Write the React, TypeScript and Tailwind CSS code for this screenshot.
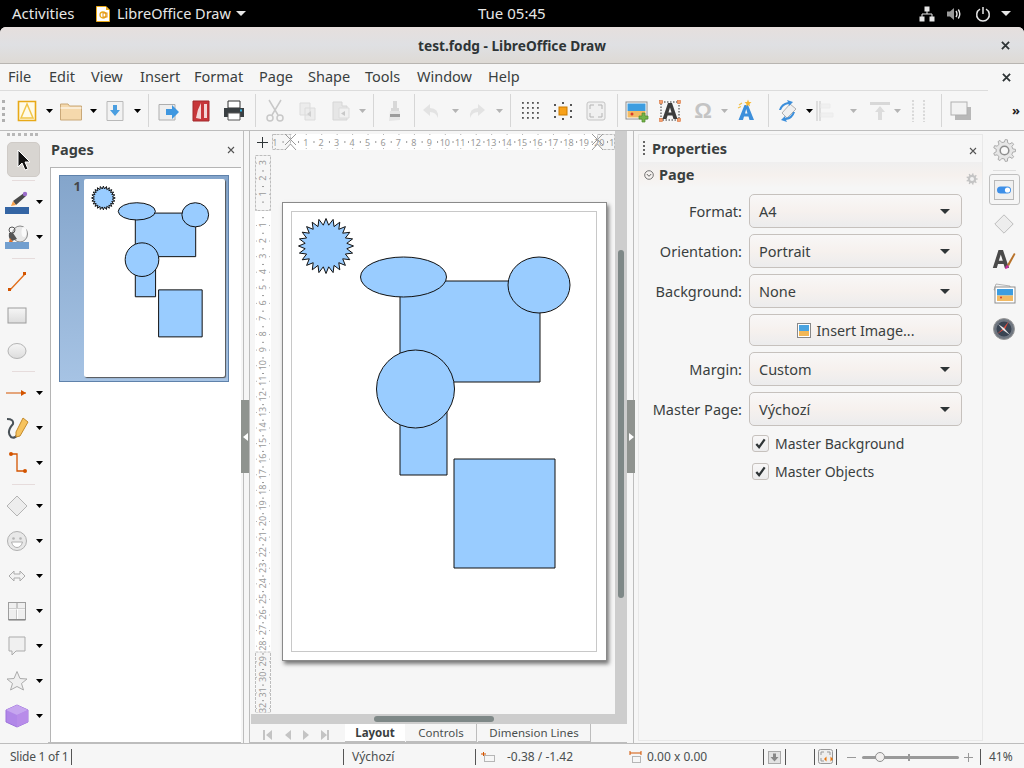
import React from "react";

const FONT = "[font-family:'Noto_Sans','Open_Sans',sans-serif]";

function starPoints(cx: number, cy: number, R: number, r: number, n: number) {
  const pts: string[] = [];
  for (let i = 0; i < n * 2; i++) {
    const a = (Math.PI * i) / n - Math.PI / 2;
    const q = i % 2 === 0 ? R : r;
    pts.push(`${(cx + q * Math.cos(a)).toFixed(1)},${(cy + q * Math.sin(a)).toFixed(1)}`);
  }
  return pts.join(" ");
}

function gearPoints(cx: number, cy: number, R: number, r: number, n: number) {
  const pts: string[] = [];
  const w = Math.PI / n;
  for (let i = 0; i < n; i++) {
    const a = (2 * Math.PI * i) / n;
    [
      [a - w * 0.55, r],
      [a - w * 0.3, R],
      [a + w * 0.3, R],
      [a + w * 0.55, r],
    ].forEach(([t, q]) => pts.push(`${(cx + q * Math.cos(t)).toFixed(2)},${(cy + q * Math.sin(t)).toFixed(2)}`));
  }
  return pts.join(" ");
}

function Shapes({ className }: { className: string }) {
  const p = { fill: "#99ccff", stroke: "#111", strokeWidth: 1, vectorEffect: "non-scaling-stroke" as const };
  return (
    <svg viewBox="0 0 325 459" className={className}>
      <polygon points={starPoints(44, 44, 27.5, 21, 24)} {...p} />
      <rect x="118" y="79" width="140" height="101" {...p} />
      <ellipse cx="121.5" cy="75" rx="43" ry="20" {...p} />
      <ellipse cx="257" cy="83" rx="31" ry="28" {...p} />
      <rect x="118" y="208" width="47" height="65" {...p} />
      <circle cx="133.5" cy="187" r="39" {...p} />
      <rect x="172" y="257" width="101" height="109" {...p} />
    </svg>
  );
}

function Ic({ children, s = 24, className = "" }: { children: React.ReactNode; s?: number; className?: string }) {
  return (
    <svg viewBox="0 0 24 24" width={s} height={s} className={`shrink-0 ${className}`}>
      {children}
    </svg>
  );
}

function Arrow({ className = "", dim = false }: { className?: string; dim?: boolean }) {
  return (
    <svg viewBox="0 0 7 4" width="7" height="4" className={`shrink-0 ${className}`}>
      <path d="M0 0 H7 L3.5 4 Z" fill={dim ? "#b4b4b4" : "#000"} />
    </svg>
  );
}

function TSep({ className }: { className: string }) {
  return <div className={`w-px h-[33px] bg-[#d6d6d6] shrink-0 ${className}`} />;
}

function LSep() {
  return <div className="h-px w-[23px] bg-[#e6dcdc] ml-[12px]" />;
}

function LRow({ children, arrow, className = "" }: { children: React.ReactNode; arrow?: boolean; className?: string }) {
  return (
    <div className={`flex items-center h-[35px] ${className}`}>
      <div className="w-[34px] flex justify-center">{children}</div>
      {arrow ? <Arrow className="ml-[1.5px]" /> : null}
    </div>
  );
}

function Drop({ label, value }: { label: string; value: string }) {
  return (
    <div className="flex items-center gap-[7px]">
      <div className="w-[103px] pt-[2px] text-right text-[14.5px] text-[#3a3f3f]">{label}</div>
      <div className="w-[213px] h-[34px] rounded-[5px] border border-[#c6c1bd] bg-gradient-to-b from-[#f8f7f7] via-[#f6f1ee] to-[#ececed] flex items-center justify-between pl-[9px] pr-[11px] text-[14.5px] text-[#3a3f3f]">
        <span className="pt-[2px]">{value}</span>
        <div className="w-0 h-0 border-l-[5px] border-r-[5px] border-t-[5px] border-l-transparent border-r-transparent border-t-[#2e3436]" />
      </div>
    </div>
  );
}

function Check({ label }: { label: string }) {
  return (
    <div className="flex items-center h-[28px] ml-[113px] text-[14px] text-[#3a3f3f]">
      <div className="w-[17px] h-[17px] rounded-[3px] border border-[#c6c1bd] bg-gradient-to-b from-[#f8f7f7] to-[#ececed] flex items-center justify-center">
        <svg viewBox="0 0 14 14" width="13" height="13">
          <path d="M2.5 7.5 L5.5 11 L11.5 2.5" fill="none" stroke="#2e3436" strokeWidth="2.4" />
        </svg>
      </div>
      <span className="ml-[6px]">{label}</span>
    </div>
  );
}

function HRuler() {
  const ticks: React.ReactNode[] = [];
  const step = 15.45;
  const o = 290.3 - 272;
  for (let i = -1; i <= 21; i++) {
    const x = o + i * step;
    if (i !== 0)
      ticks.push(
        <text key={"t" + i} x={i > 20 ? x - 3 : x} y="11.5" textAnchor="middle" fontSize="9" fill="#9a9a9a" fontFamily="'Noto Sans'">
          {i < 0 ? -i : i > 20 ? i - 20 : i}
        </text>
      );
    ticks.push(<rect key={"d" + i} x={x + step / 2} y="7" width="1" height="2" fill="#9a9a9a" />);
    ticks.push(<rect key={"u" + i} x={x} y="0" width="1" height="1" fill="#b4b4b4" />);
    ticks.push(<rect key={"b" + i} x={x} y="14" width="1" height="1" fill="#b4b4b4" />);
  }
  return (
    <svg width="343" height="16" className="block">
      <rect width="343" height="16" fill="#ffffff" />
      <rect x="0.5" y="0.5" width="18" height="15" fill="#f6f6f6" stroke="#bdbdbd" strokeDasharray="3 1" />
      <rect x="325.5" y="0.5" width="17" height="15" fill="#f6f6f6" stroke="#bdbdbd" strokeDasharray="3 1" />
      {ticks}
      <path d="M13 0 L24 11 M24 0 L13 11 M13 16 L18.5 10 L24 16" stroke="#9a9a9a" fill="#fff" strokeWidth="1" />
      <path d="M320 0 L331 11 M331 0 L320 11 M320 16 L325.5 10 L331 16" stroke="#9a9a9a" fill="#fff" strokeWidth="1" />
    </svg>
  );
}

function VRuler() {
  const ticks: React.ReactNode[] = [];
  const step = 15.58;
  const o = 209.4 - 155;
  const H = 558;
  for (let i = -3; i <= 32; i++) {
    const y = o + i * step;
    if (i !== 0)
      ticks.push(
        <text key={"t" + i} x="7.5" y={y} transform={`rotate(-90 7.5 ${y})`} textAnchor="middle" dominantBaseline="central" fontSize="9" fill="#9a9a9a" fontFamily="'Noto Sans'">
          {i < 0 ? -i : i}
        </text>
      );
    ticks.push(<rect key={"d" + i} x="7" y={y + step / 2} width="2" height="1" fill="#9a9a9a" />);
    ticks.push(<rect key={"l" + i} x="1" y={y} width="1" height="1" fill="#b4b4b4" />);
    ticks.push(<rect key={"r" + i} x="14" y={y} width="1" height="1" fill="#b4b4b4" />);
  }
  return (
    <svg width="16" height={H} className="block">
      <rect width="16" height={H} fill="#ffffff" />
      <rect x="0.5" y="0.5" width="15" height="55" fill="#f6f6f6" stroke="#bdbdbd" strokeDasharray="3 1" />
      <rect x="0.5" y="497" width="15" height="61" fill="#f6f6f6" stroke="#bdbdbd" strokeDasharray="3 1" />
      {ticks}
    </svg>
  );
}

function Sash({ left }: { left?: boolean }) {
  return (
    <div className={`h-full relative shrink-0 ${left ? "w-[9px]" : "w-[8px]"}`}>
      <div className={`absolute top-0 bottom-0 w-px bg-[#bdbdbd] ${left ? "left-[2px] " : "left-[6px]"}`} />
      {left ? <div className="absolute top-0 bottom-0 w-px bg-[#bdbdbd] left-[8px]" /> : null}
      <div className="absolute left-0 top-[269px] w-[8px] h-[73px] bg-[#8f938f] flex items-center justify-center">
        <div
          className={`w-0 h-0 border-t-[4px] border-b-[4px] border-t-transparent border-b-transparent ${
            left ? "border-r-[5px] border-r-white" : "border-l-[5px] border-l-white"
          }`}
        />
      </div>
    </div>
  );
}

const cursorIc = (
  <Ic s={24}>
    <path d="M6 2 L6 19 L10 15 L13 22 L16 21 L13 14 L18 14 Z" fill="#111" stroke="#fff" strokeWidth="1" />
  </Ic>
);

export default function App() {
  return (
    <div className={`w-[1024px] h-[768px] overflow-hidden bg-black flex flex-col ${FONT}`}>
      {/* GNOME top bar */}
      <div className="h-[27px] bg-black text-[#e6e6e6] text-[14.5px] flex items-center shrink-0 relative">
        <span className="ml-[12px] w-[84px] text-[15px]">Activities</span>
        <svg viewBox="0 0 14 16" width="14" height="16" className="shrink-0">
          <path d="M0.5 0.5 H10 L13.5 4 V15.5 H0.5 Z" fill="#fff" stroke="#e8a917" />
          <path d="M10 0.5 L13.5 4 H10 Z" fill="#e8a917" />
          <circle cx="7" cy="9" r="3" fill="none" stroke="#e8a917" strokeWidth="1.3" />
          <rect x="7" y="7" width="4" height="4" fill="none" stroke="#e28f1a" strokeWidth="1" />
        </svg>
        <span className="ml-[7px] w-[114px] whitespace-nowrap">LibreOffice Draw</span>
        <div className="ml-[5px] w-0 h-0 border-l-[5px] border-r-[5px] border-t-[5px] border-l-transparent border-r-transparent border-t-[#e6e6e6]" />
        <span className="ml-[232px] text-[15px]">Tue 05:45</span>
        <div className="ml-auto flex items-center mr-[13px]">
          <svg viewBox="0 0 16 16" width="16" height="16">
            <path d="M5.5 0.5 h5 v5 h-5 z M0.5 10.5 h5 v5 h-5 z M10.5 10.5 h5 v5 h-5 z" fill="#e6e6e6" />
            <path d="M8 5 V8 M3 11 V8 H13 V11" stroke="#e6e6e6" fill="none" />
          </svg>
          <svg viewBox="0 0 16 16" width="16" height="16" className="ml-[11px]">
            <path d="M1 5.5 H4 L8 2 V14 L4 10.5 H1 Z" fill="#9a9a9a" />
            <path d="M10 5 Q12 8 10 11 M12.3 3.5 Q15.3 8 12.3 12.5" fill="none" stroke="#e6e6e6" strokeWidth="1.4" />
          </svg>
          <svg viewBox="0 0 16 16" width="16" height="16" className="ml-[13px]">
            <path d="M5 3.2 A6.3 6.3 0 1 0 11 3.2" fill="none" stroke="#e6e6e6" strokeWidth="1.5" />
            <path d="M8 1 V8" stroke="#e6e6e6" strokeWidth="1.5" />
          </svg>
          <div className="ml-[10px] w-0 h-0 border-l-[5px] border-r-[5px] border-t-[5px] border-l-transparent border-r-transparent border-t-[#e6e6e6]" />
        </div>
      </div>

      {/* window */}
      <div className="flex-1 flex flex-col bg-[#f6f6f6] rounded-t-[6px] overflow-hidden">
        {/* title bar */}
        <div className="h-[37px] shrink-0 border-b border-[#b8b5b1] bg-gradient-to-b from-[#e6dfdd] via-[#dfe0e3] to-[#dedad5] flex items-center relative">
          <div className="w-full pt-[2px] text-center text-[13.7px] font-bold text-[#2e3436]">test.fodg - LibreOffice Draw</div>
          <svg viewBox="0 0 10 10" width="9" height="9" className="absolute right-[14px] top-[14px]">
            <path d="M1 1 L9 9 M9 1 L1 9" stroke="#2e3436" strokeWidth="2" />
          </svg>
        </div>

        {/* menu */}
        <div className="h-[27px] shrink-0 flex items-center relative">
          <div className="w-[988px] h-full flex items-center pl-[8px] text-[14.5px] text-[#3a3f3f] border-b border-[#dcdcdc]">
            <span className="w-[41px]">File</span>
            <span className="w-[42px]">Edit</span>
            <span className="w-[49px]">View</span>
            <span className="w-[54px]">Insert</span>
            <span className="w-[65px]">Format</span>
            <span className="w-[49px]">Page</span>
            <span className="w-[57px]">Shape</span>
            <span className="w-[52px]">Tools</span>
            <span className="w-[71px]">Window</span>
            <span>Help</span>
          </div>
          <svg viewBox="0 0 10 10" width="9" height="9" className="ml-[14px]">
            <path d="M1 1 L9 9 M9 1 L1 9" stroke="#2e3436" strokeWidth="2" />
          </svg>
        </div>

        {/* toolbar */}
        <div className="h-[40px] shrink-0 flex items-center border-b border-[#bdbdbd]">
          <div className="ml-[2px] w-[3px] h-[22px] border-l-[3px] border-dotted border-[#b0b0b0] shrink-0" />
          {/* new */}
          <Ic className="ml-[10px]"><path d="M3.5 2.5 H20.5 V21.5 H3.5 Z" fill="#fffbe8" stroke="#e8a917" strokeWidth="1.6" /><path d="M12 5 L6 19 H18 Z" fill="none" stroke="#f1c64a" strokeWidth="1.5" /></Ic>
          <Arrow className="ml-[7px]" />
          <Ic className="ml-[6px]"><path d="M1.5 5 H9 L10.5 7 H22.5 V21 H1.5 Z" fill="#f5d9ac" stroke="#c9a878" /><path d="M1.5 9 H22.5" stroke="#fff" /></Ic>
          <Arrow className="ml-[7px]" />
          <Ic className="ml-[6px]"><path d="M4 2.5 H20 V21.5 H4 Z" fill="#f2f2f2" stroke="#b9b9b9" /><path d="M10 6 H14 V11 H17 L12 17 L7 11 H10 Z" fill="#4a9ee0" /></Ic>
          <Arrow className="ml-[7px]" />
          <TSep className="ml-[7px]" />
          <Ic className="ml-[7px]"><path d="M3 5.5 H19 V21 H3 Z" fill="#eeeeee" stroke="#aeaeae" /><path d="M10 10 H16 V6 L23 13 L16 20 V16 H10 Z" fill="#3f97e0" /></Ic>
          <Ic className="ml-[9px]"><path d="M4 2 H20 V22 H4 Z" fill="#c7373a" stroke="#a32a2d" /><path d="M12 4 Q8 11 7 19 L12 20 Z M15 5 V19 H18 V5 Z" fill="#f3d7d7" /></Ic>
          <Ic className="ml-[9px]"><path d="M6 2 H18 V9 H6 Z" fill="#fff" stroke="#333" /><path d="M2 9 H22 V18 H18 V14 H6 V18 H2 Z" fill="#3a3f42" /><path d="M6 14 H18 V21 H6 Z" fill="#fff" stroke="#555" /><path d="M18 10.5 h2 v2 h-2 z" fill="#35b6e6" /></Ic>
          <TSep className="ml-[9px]" />
          {/* cut copy paste */}
          <Ic className="ml-[7px]"><g fill="none" stroke="#c8c8c8" strokeWidth="1.5"><path d="M6 1 L15 16 M18 1 L9 16" /><circle cx="7" cy="19" r="3" /><circle cx="17" cy="19" r="3" /></g></Ic>
          <Ic className="ml-[9px]"><path d="M4 4 H14 V16 H4 Z M9 9 H19 V21 H9 Z" fill="#ececec" stroke="#dcdcdc" /><path d="M15 12 L11 15 L15 18 Z" fill="#cfcfcf" /></Ic>
          <Ic className="ml-[9px]"><path d="M4 3 H13 V7 H18 V21 H4 Z" fill="#e6e6e6" stroke="#d6d6d6" /><path d="M10 9 H20 V19 H10 Z" fill="#f0f0f0" stroke="#dcdcdc" /><path d="M16 12 L12 14.5 L16 17 Z" fill="#c8c8c8" /></Ic>
          <Arrow dim className="ml-[6px]" />
          <TSep className="ml-[7px]" />
          <Ic className="ml-[9px]"><path d="M10 2 H14 V9 H16 V12 H8 V9 H10 Z" fill="#d8d8d8" /><path d="M7 12 H17 V21 L6 22 Z" fill="#e6e6e6" /><path d="M7 15 H17 V18 H7 Z" fill="#9c9c9c" /></Ic>
          <TSep className="ml-[7px]" />
          <Ic className="ml-[5px]"><path d="M10 5 L3 11 L10 17 V13 Q16 13 18 19 Q19 9 10 9 Z" fill="#e3e3e3" /></Ic>
          <Arrow dim className="ml-[8px]" />
          <Ic className="ml-[5px]"><path d="M14 5 L21 11 L14 17 V13 Q8 13 6 19 Q5 9 14 9 Z" fill="#e3e3e3" /></Ic>
          <Arrow dim className="ml-[8px]" />
          <TSep className="ml-[7px]" />
          {/* grid */}
          <Ic className="ml-[8px]"><g fill="#555">{[3, 8, 13, 18].map((y) => [3, 8, 13, 18].map((x) => <rect key={x + "-" + y} x={x} y={y} width="1.8" height="1.8" />))}</g></Ic>
          <Ic className="ml-[8px]"><rect x="8" y="8" width="8" height="8" fill="#f7a11a" stroke="#c97b00" /><g fill="#555"><rect x="3" y="5" width="2" height="2" /><rect x="3" y="11" width="2" height="2" /><rect x="3" y="17" width="2" height="2" /><rect x="19" y="5" width="2" height="2" /><rect x="19" y="11" width="2" height="2" /><rect x="19" y="17" width="2" height="2" /><rect x="11" y="3" width="2" height="2" /><rect x="11" y="19" width="2" height="2" /></g></Ic>
          <Ic className="ml-[9px]"><rect x="3" y="3" width="18" height="18" rx="2" fill="#f0f0f0" stroke="#c4c4c4" /><path d="M6 10 V6 H10 M14 6 H18 V10 M18 14 V18 H14 M10 18 H6 V14" fill="none" stroke="#b4b4b4" /></Ic>
          <TSep className="ml-[9px]" />
          {/* image, text, omega, fontwork */}
          <Ic className="ml-[7px]"><rect x="1" y="3" width="21" height="17" fill="#fff" stroke="#8e8e8e" /><path d="M2.5 4.5 H20.5 V12 H2.5 Z" fill="#3d9de0" /><path d="M2.5 12 H20.5 V18.5 H2.5 Z" fill="#f2ba63" /><path d="M17 14 H20 V17 H23 V20 H20 V23 H17 V20 H14 V17 H17 Z" fill="#73b349" stroke="#4d8a2b" strokeWidth="0.7" /><circle cx="7" cy="15" r="1.5" fill="#d93a2c" /></Ic>
          <Ic className="ml-[9px]"><path d="M3 3 H21 V21 H3 Z" fill="none" stroke="#333" strokeDasharray="1.5 1.5" /><g fill="#f5a070" stroke="#d8763f" strokeWidth="0.6"><rect x="1.5" y="1.5" width="3" height="3" /><rect x="19.5" y="1.5" width="3" height="3" /><rect x="1.5" y="19.5" width="3" height="3" /><rect x="19.5" y="19.5" width="3" height="3" /></g><path d="M10 4 H14 L19.5 20 H15.5 L14.4 16.5 H9.6 L8.5 20 H4.5 Z M10.5 13.5 H13.5 L12 8.5 Z" fill="#3c3c3c" fillRule="evenodd" /></Ic>
          <div className="ml-[9px] w-[24px] h-[24px] shrink-0 flex items-center justify-center text-[22px] leading-none font-bold text-[#c4c4c4] [font-family:'Liberation_Sans',sans-serif]">Ω</div>
          <Arrow dim className="ml-[6px]" />
          <Ic className="ml-[6px]"><path d="M10.5 6 H14 L20 21 H15.5 L14.5 17.5 H10 L9 21 H4.5 Z M11 14.5 H13.5 L12.2 10 Z" fill="#3d8fdb" fillRule="evenodd" /><path d="M14 0.5 L15 3 L17.5 3 L15.5 5 L16 7.5 L14 6 L12 7.5 L12.5 5 L10.5 3 L13 3 Z" fill="#f7b733" /><path d="M5 6 L8 4 M4 9 L7 7.5" stroke="#f3c04a" strokeWidth="1.2" /></Ic>
          <TSep className="ml-[10px]" />
          <Ic className="ml-[6px]"><path d="M7 14 L15 5 L21 10 L12 19 Z" fill="#f0f0f0" stroke="#b0b0b0" /><path d="M4 11 Q6 4 13 3 L12 1 L18 3 L14 7 L13.5 5 Q8 6 6 11 Z M20 13 Q18 20 11 21 L12 23 L6 21 L10 17 L10.5 19 Q16 18 18 13 Z" fill="#3d8fdb" /></Ic>
          <Arrow className="ml-[7px]" />
          <Ic><path d="M4 2 V22 M7 2 V22" stroke="#d6d6d6" strokeWidth="1.5" /><path d="M8 5 H17 V9 H8 Z M8 14 H20 V18 H8 Z" fill="#f0f0f0" stroke="#ececec" /></Ic>
          <Arrow dim className="ml-[13px]" />
          <Ic className="ml-[11px]"><path d="M2 3 H22 V6 H2 Z" fill="#d8d8d8" /><path d="M12 7 L17 13 H14 V21 H10 V13 H7 Z" fill="#dcdcdc" /></Ic>
          <Arrow dim className="ml-[2px]" />
          <Ic className="ml-[6px]"><g fill="none" stroke="#d8d8d8" strokeWidth="2" strokeDasharray="2 1.5"><path d="M6 1 V23 M17 1 V23" /></g></Ic>
          <TSep className="ml-[10px]" />
          <Ic className="ml-[7px]"><rect x="6" y="8" width="16" height="13" fill="#b8b8b8" /><rect x="2" y="3" width="16" height="13" fill="#f2f2f2" stroke="#b0b0b0" /></Ic>
          <span className="ml-[39px] text-[13px] font-bold leading-none text-[#222]">»</span>
        </div>

        {/* main */}
        <div className="flex-1 flex min-h-0">
          {/* Left tools */}
          <div className="w-[48px] shrink-0 flex flex-col">
            <div className="mt-[2px] ml-[7px] w-[31px] h-0 border-t-[3px] border-dotted border-[#b8b8b8]" />
            <div className="mt-[6px] ml-[7px] w-[33px] h-[35px] bg-[#d8d5d1] rounded-[5px] border border-[#cfcbc7] flex items-center justify-center">{cursorIc}</div>
            <div className="mt-[3px]"><LSep /></div>
            <LRow arrow className="mt-[3px]">
              <Ic><path d="M8 11 L19 3 L21 6 L11 15 Z" fill="#4a4a4a" /><circle cx="20" cy="4" r="2.2" fill="#9a6cc9" /><path d="M8 11 L11 15 L6 16 Z" fill="#f5a04a" /><rect x="0" y="17" width="24" height="7" fill="#3465a4" /></Ic>
            </LRow>
            <LRow arrow>
              <Ic><ellipse cx="15" cy="9" rx="7.5" ry="8" fill="#e8e8e8" stroke="#8a8a8a" /><ellipse cx="19" cy="7" rx="2.5" ry="5" fill="#fafafa" /><circle cx="7" cy="5" r="3" fill="none" stroke="#555" /><path d="M4 8 Q3 14 7 16 L12 14 L8 8 Z" fill="#555" /><path d="M5 13 L8 17 L4 17 Z" fill="#e0722a" /><rect x="0" y="17" width="24" height="7" fill="#729fcf" /></Ic>
            </LRow>
            <div className="mt-[4px]"><LSep /></div>
            <LRow className="mt-[4px]">
              <Ic><path d="M5 21 L20 5" stroke="#e16c17" strokeWidth="1.2" /><rect x="3" y="19" width="3" height="3" fill="#d35400" /><rect x="18" y="3" width="3" height="3" fill="#d35400" /></Ic>
            </LRow>
            <LRow>
              <Ic><defs><linearGradient id="gr" x1="0" y1="0" x2="0" y2="1"><stop offset="0" stopColor="#f6f6f6" /><stop offset="1" stopColor="#dcdcdc" /></linearGradient></defs><rect x="3" y="4" width="18" height="15" fill="url(#gr)" stroke="#9c9c9c" /></Ic>
            </LRow>
            <LRow>
              <Ic><ellipse cx="12" cy="12" rx="9" ry="7.5" fill="url(#gr)" stroke="#b4b4b4" /></Ic>
            </LRow>
            <div className="mt-[3px]"><LSep /></div>
            <LRow arrow className="mt-[3px]">
              <Ic><path d="M1 12 H21" stroke="#d35400" strokeWidth="1" /><path d="M16 9 L21 12 L16 15 Z" fill="#d35400" /></Ic>
            </LRow>
            <LRow arrow>
              <Ic><path d="M2 3 Q9 3 8 8 Q1 16 6 21 Q10 23 12 19" fill="none" stroke="#4a5258" strokeWidth="2" /><path d="M18 2 L23 6 L15 20 L11 21 L11 16 Z" fill="#f6c35f" stroke="#c48a2a" /></Ic>
            </LRow>
            <LRow arrow>
              <Ic><path d="M6 3 H12 V20 H20" fill="none" stroke="#d35400" strokeWidth="1.3" /><circle cx="6" cy="3" r="2" fill="#d35400" /><circle cx="20" cy="20" r="2" fill="#d35400" /></Ic>
            </LRow>
            <div className="mt-[4px]"><LSep /></div>
            <LRow arrow className="mt-[3px]">
              <Ic><path d="M12 2 L22 12 L12 22 L2 12 Z" fill="#ededed" stroke="#b4b4b4" /></Ic>
            </LRow>
            <LRow arrow>
              <Ic><circle cx="12" cy="12" r="9.5" fill="#e8e8e8" stroke="#b0b0b0" /><circle cx="8.5" cy="9.5" r="1.3" fill="#b4b4b4" /><circle cx="15.5" cy="9.5" r="1.3" fill="#b4b4b4" /><path d="M6.5 13 H17.5 Q16 18.5 12 18.5 Q8 18.5 6.5 13 Z" fill="#fff" stroke="#b0b0b0" /></Ic>
            </LRow>
            <LRow arrow>
              <Ic><path d="M4 12 L9 7 V10 H15 V7 L20 12 L15 17 V14 H9 V17 Z" fill="#f2f2f2" stroke="#ababab" /></Ic>
            </LRow>
            <LRow arrow>
              <Ic><rect x="3.5" y="3.5" width="17" height="17" fill="#efefef" stroke="#9e9e9e" /><path d="M12 3.5 V20.5 M3.5 9.5 H20.5" stroke="#9e9e9e" /><path d="M12.5 10 V20 M4 10 H20" stroke="#fff" /><path d="M3.5 21 H20.5" stroke="#777" /></Ic>
            </LRow>
            <LRow arrow>
              <Ic><path d="M4 3 H20 V17 H11 L7 21 V17 H4 Z" fill="#f0f0f0" stroke="#ababab" /></Ic>
            </LRow>
            <LRow arrow>
              <Ic><path d="M12 2.5 L15 9.5 L22 10 L16.5 14.5 L18.5 21 L12 17.5 L5.5 21 L7.5 14.5 L2 10 L9 9.5 Z" fill="#efefef" stroke="#ababab" /></Ic>
            </LRow>
            <LRow arrow>
              <Ic><path d="M12 1 L23 6 V18 L12 23 L1 18 V6 Z" fill="#b187e8" stroke="#9e72dc" /><path d="M1 6 L12 11 L23 6 L12 1 Z" fill="#c6a6ef" /><path d="M12 11 V23 L23 18 V6 Z" fill="#b88ce9" /></Ic>
            </LRow>
          </div>

          {/* Pages panel */}
          <div className="w-[193px] shrink-0 flex flex-col border-b border-[#bdbdbd] relative">
            <div className="h-[36px] shrink-0 flex items-center justify-between pl-[3px] pr-[6px] pt-[2px]">
              <span className="text-[14.5px] font-bold text-[#3a3f3f]">Pages</span>
              <svg viewBox="0 0 8 8" width="8" height="8"><path d="M1 1 L7 7 M7 1 L1 7" stroke="#555" strokeWidth="1.1" /></svg>
            </div>
            <div className="flex-1 ml-[2px] bg-white border-l border-t border-[#b5b5b5] pt-[7px] pl-[8px]">
              <div className="w-[170px] h-[207px] border border-[#5f82ab] bg-gradient-to-b from-[#84a5cb] to-[#a6c3e4] flex pt-[3px]">
                <span className="w-[24px] text-right text-[13px] font-bold text-[#44474a] leading-[14px] pr-[3px]">1</span>
                <div className="w-[141px] h-[198px] bg-white rounded-[2px] shadow-[1px_1px_1px_#555]">
                  <Shapes className="w-full h-full" />
                </div>
              </div>
            </div>
          </div>

          <Sash left />

          {/* Centre */}
          <div className="w-[377px] shrink-0 flex flex-col min-h-0">
            <div className="flex-1 flex min-h-0">
              <div className="w-[365px] flex flex-col">
                <div className="flex items-center h-[16px] mt-[3px] shrink-0">
                  <svg viewBox="0 0 11 11" width="11" height="11" className="ml-[7px]"><path d="M5.5 0 V11 M0 5.5 H11" stroke="#2e3436" /></svg>
                  <div className="ml-[4px]"><HRuler /></div>
                </div>
                <div className="flex flex-1 min-h-0 overflow-hidden">
                  <div className="ml-[5px] w-[16px] mt-[5px] shrink-0"><VRuler /></div>
                  <div className="flex-1">
                    <div className="mt-[52px] ml-[11px] w-[325px] h-[459px] bg-white border border-[#8a8a8a] shadow-[2px_3px_4px_#777] relative pl-[8px] pt-[8px] pr-[9px] pb-[8px]">
                      <div className="w-full h-full border border-[#c8c8c8]" />
                      <Shapes className="absolute -left-px -top-px w-[325px] h-[459px]" />
                    </div>
                  </div>
                </div>
                <div className="h-[10px] bg-[#cdcdcd] ml-[1px] w-[364px] shrink-0 flex items-center">
                  <div className="ml-[123px] w-[120px] h-[6px] rounded-[3px] bg-[#7e8887]" />
                </div>
              </div>
              <div className="w-[12px] bg-[#cdcdcd] flex flex-col">
                <div className="mt-[119px] ml-[3px] w-[6px] h-[348px] rounded-[3px] bg-[#7e8887]" />
              </div>
            </div>
            <div className="h-[19px] shrink-0 flex items-start border-b border-[#bdbdbd] text-[11.5px] text-[#4a4f4f]">
              <svg viewBox="0 0 66 12" width="66" height="12" className="ml-[13px] mt-[5px]">
                <g fill="#c4c4c4"><path d="M0 1 H2 V11 H0 Z M9 1 V11 L3 6 Z" /><path d="M28 1 V11 L22 6 Z" /><path d="M40 1 V11 L46 6 Z" /><path d="M58 1 V11 L64 6 Z M64 1 H66 V11 H64 Z" /></g>
              </svg>
              <div className="ml-[16px] w-[60px] h-[18px] bg-white border-b border-[#bdbdbd] font-bold text-[#3a3f3f] flex items-center justify-center">Layout</div>
              <div className="ml-px w-[71px] h-[18px] border-b border-r border-[#bdbdbd] flex items-center justify-center">Controls</div>
              <div className="ml-px w-[113px] h-[18px] border-b border-r border-[#bdbdbd] flex items-center justify-center">Dimension Lines</div>
            </div>
          </div>

          <Sash />

          {/* Properties */}
          <div className="w-[349px] shrink-0 pl-[3px] pr-px pt-[3px] pb-[2px]">
            <div className="h-full border border-[#e8e8e8]">
              <div className="h-[27px] flex items-center relative pl-[13px]">
                <div className="absolute left-[4px] top-[6px] h-[14px] w-0 border-l-[2px] border-dotted border-[#666]" />
                <span className="text-[14.5px] font-bold text-[#3a3f3f]">Properties</span>
                <svg viewBox="0 0 8 8" width="8" height="8" className="ml-auto mr-[5px] mt-[4px]"><path d="M1 1 L7 7 M7 1 L1 7" stroke="#555" strokeWidth="1.1" /></svg>
              </div>
              <div className="h-[26px] bg-gradient-to-b from-[#efefef] via-[#f6f1ee] to-[#f6f6f6] flex items-center relative pl-[5px]">
                <svg viewBox="0 0 10 10" width="10" height="10"><circle cx="5" cy="5" r="4.3" fill="none" stroke="#555" strokeWidth="0.8" /><path d="M2.8 4 L5 6.3 L7.2 4" fill="none" stroke="#555" strokeWidth="0.9" /></svg>
                <span className="ml-[5px] text-[14.5px] font-bold text-[#3a3f3f]">Page</span>
                <svg viewBox="0 0 24 24" width="12" height="12" className="absolute right-[4px] top-[11px]"><polygon points={gearPoints(12, 12, 11.5, 8.5, 9)} fill="#c4c4c4" /><circle cx="12" cy="12" r="4" fill="#f2f2f2" /></svg>
              </div>
              <div className="flex flex-col gap-[6px] pt-[6px]">
                <Drop label="Format:" value="A4" />
                <Drop label="Orientation:" value="Portrait" />
                <Drop label="Background:" value="None" />
                <div className="ml-[110px] w-[213px] h-[32px] rounded-[5px] border border-[#c6c1bd] bg-gradient-to-b from-[#f8f7f7] via-[#f6f1ee] to-[#ececed] flex items-center justify-center gap-[6px] text-[14.3px] text-[#3a3f3f]">
                  <svg viewBox="0 0 14 15" width="14" height="15"><rect x="0.5" y="0.5" width="13" height="14" fill="#fff" stroke="#888" /><rect x="2" y="2" width="10" height="6" fill="#4aa3e0" /><rect x="2" y="8" width="10" height="5" fill="#f2b755" /></svg>
                  <span className="pt-[2px]">Insert Image...</span>
                </div>
                <Drop label="Margin:" value="Custom" />
                <Drop label="Master Page:" value="Výchozí" />
              </div>
              <div className="mt-[3px]">
                <Check label="Master Background" />
                <Check label="Master Objects" />
              </div>
            </div>
          </div>

          {/* Sidebar tabs */}
          <div className="w-[40px] shrink-0 flex flex-col items-center">
            <div className="h-[39px] flex items-center">
              <svg viewBox="0 0 24 24" width="23" height="23"><polygon points={gearPoints(12, 12, 11.5, 8.8, 9)} fill="#e6e6e6" stroke="#a8a8a8" /><circle cx="12" cy="12" r="4.5" fill="#f8f8f8" stroke="#8e8e8e" strokeWidth="1.6" /></svg>
            </div>
            <div className="w-[23px] h-px bg-[#dedede]" />
            <div className="mt-[3px] w-[31px] h-[31px] rounded-[3px] border border-[#bfbfbf] flex items-center justify-center">
              <svg viewBox="0 0 20 20" width="20" height="20"><rect x="0.5" y="0.5" width="19" height="19" fill="#f0f0f0" stroke="#b8b8b8" /><rect x="3" y="6.5" width="14" height="7" rx="3.5" fill="#3d8fe8" /><circle cx="13.5" cy="10" r="2.6" fill="#fff" /></svg>
            </div>
            <div className="h-[35px] mt-[1px] flex items-center">
              <svg viewBox="0 0 24 24" width="22" height="22"><path d="M12 2 L22 12 L12 22 L2 12 Z" fill="#ededed" stroke="#b8b8b8" /></svg>
            </div>
            <div className="h-[35px] flex items-center">
              <svg viewBox="0 0 24 24" width="24" height="24"><path d="M6.5 3 H11 L17 21 H12.8 L11.6 17 H6 L4.8 21 H0.8 Z M6.8 13.8 H10.8 L8.8 7.5 Z" fill="#4a4a4a" fillRule="evenodd" /><path d="M15 18 L22 6 L23.5 7 L17 19 Z" fill="#b8722a" /><path d="M13 22 Q13.5 18.5 15 18 L17 19 Q16 22 13 22 Z" fill="#c7319f" /></svg>
            </div>
            <div className="h-[35px] flex items-center">
              <svg viewBox="0 0 24 24" width="24" height="24"><path d="M2 8 L4 2 L18 4 L18 8 Z" fill="#f4f4f4" stroke="#999" strokeWidth="0.7" /><rect x="3" y="5" width="20" height="16" fill="#fff" stroke="#8e8e8e" /><rect x="5" y="7" width="16" height="6.5" fill="#3d9de0" /><rect x="5" y="13.5" width="16" height="5.5" fill="#f2ba63" /><circle cx="9" cy="15.5" r="1" fill="#d93a2c" /></svg>
            </div>
            <div className="h-[35px] flex items-center">
              <svg viewBox="0 0 24 24" width="24" height="24"><circle cx="12" cy="12" r="10.5" fill="#6f7680" stroke="#9a9a9a" /><circle cx="12" cy="12" r="7.5" fill="#3a4452" /><path d="M17 4 L13 12 L5 17 L11 11.5 Z" fill="#e24c3f" /><path d="M6 7 L12 11 L18 18 L11 13 Z" fill="#e8e8e8" /></svg>
            </div>
          </div>
        </div>

        {/* Status bar */}
        <div className="h-[25px] shrink-0 border-t border-[#bdbdbd] flex items-center pt-[2px] text-[12px] text-[#4a4f4f]">
          <div className="w-[71px] pl-[10px] whitespace-nowrap tracking-[-0.25px]">Slide 1 of 1</div>
          <div className="w-px h-4 bg-[#555] shrink-0" />
          <div className="w-[271px]" />
          <div className="w-px h-4 bg-[#555] shrink-0" />
          <div className="w-[131px] pl-[8px]">Výchozí</div>
          <div className="w-px h-4 bg-[#555] shrink-0" />
          <svg viewBox="0 0 14 10" width="14" height="10" className="ml-[5px] shrink-0"><path d="M0 2 H5 M2.5 0 V4" stroke="#d35400" /><rect x="3.5" y="3.5" width="10" height="6" fill="none" stroke="#777" strokeDasharray="1 1" /></svg>
          <div className="ml-[12px] w-[122px]">-0.38 / -1.42</div>
          <svg viewBox="0 0 14 12" width="14" height="12" className="shrink-0"><path d="M1 0 V4 M1 2 H12 M12 0 V4" stroke="#d35400" /><rect x="3.5" y="5.5" width="8" height="6" fill="none" stroke="#777" strokeDasharray="1 1" /></svg>
          <div className="ml-[4px] w-[116px]">0.00 x 0.00</div>
          <div className="w-px h-4 bg-[#555] shrink-0" />
          <div className="w-[21px] flex justify-center">
            <svg viewBox="0 0 13 13" width="13" height="13"><rect x="0.5" y="0.5" width="12" height="12" fill="#e2e2e2" stroke="#aaa" /><path d="M5 2.5 H8 V6 H10.5 L6.5 10.5 L2.5 6 H5 Z" fill="#888" /></svg>
          </div>
          <div className="w-px h-4 bg-[#555] shrink-0" />
          <div className="w-[28px]" />
          <div className="w-px h-4 bg-[#555] shrink-0" />
          <div className="w-[21px] flex justify-center">
            <svg viewBox="0 0 16 16" width="16" height="16"><rect x="0.5" y="0.5" width="14" height="14" rx="2" fill="#eee" stroke="#999" /><path d="M3 6 V3 H6 M9 3 H12 V6 M3 9 V12 H6" fill="none" stroke="#999" /><path d="M6 10 L8.5 7.5 V12.5 Z M15 10 L12.5 7.5 V12.5 Z" fill="#e8740c" /></svg>
          </div>
          <div className="w-px h-4 bg-[#555] shrink-0" />
          <div className="ml-[10px] w-[9px] h-px bg-[#999] shrink-0" />
          <div className="ml-[6px] w-[97px] h-[3px] bg-[#9a9a9a] rounded-sm shrink-0 relative">
            <div className="absolute left-[13px] -top-[4px] w-[10px] h-[10px] rounded-full bg-[#f2f0ef] border border-[#8f8f8f]" />
            <div className="absolute left-[46px] -top-[2px] w-[2px] h-[7px] bg-[#9a9a9a]" />
          </div>
          <svg viewBox="0 0 9 9" width="9" height="9" className="ml-[5px] shrink-0"><path d="M4.5 0 V9 M0 4.5 H9" stroke="#999" /></svg>
          <div className="ml-[7px] w-px h-4 bg-[#555] shrink-0" />
          <div className="ml-[8px]">41%</div>
        </div>
      </div>
    </div>
  );
}
